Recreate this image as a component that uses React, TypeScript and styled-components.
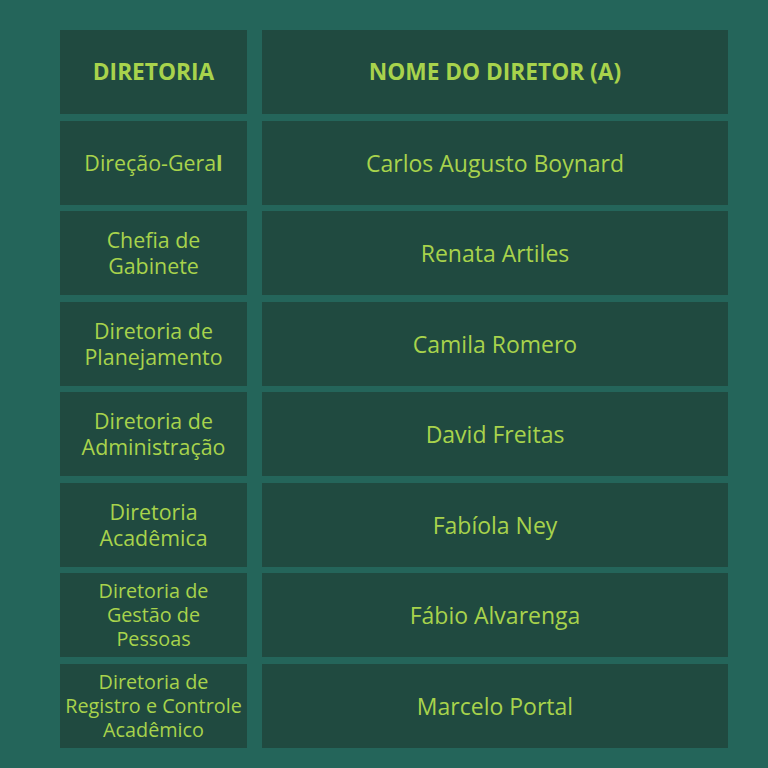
import React from 'react';
import styled, { createGlobalStyle } from 'styled-components';

const Global = createGlobalStyle`
  html, body {
    margin: 0;
    padding: 0;
    background: #24655a;
  }
  body {
    font-family: 'Open Sans', 'Liberation Sans', sans-serif;
  }
`;

const Page = styled.div`
  width: 768px;
  height: 768px;
  box-sizing: border-box;
  padding: 30px 40px 20px 60px;
  background: #24655a;
`;

const Table = styled.div`
  display: grid;
  grid-template-columns: 187px 466px;
  grid-auto-rows: 84px;
  column-gap: 15px;
  row-gap: 6.5px;
`;

const Cell = styled.div<{ $wide?: boolean; $head?: boolean; $small?: boolean }>`
  background: #204a40;
  color: #a8d34c;
  display: flex;
  align-items: center;
  justify-content: center;
  text-align: center;
  font-size: ${(p) => (p.$head ? '22.7px' : p.$wide ? '23px' : p.$small ? '19.8px' : '21.4px')};
  font-weight: ${(p) => (p.$head ? 700 : 400)};
  line-height: ${(p) => (p.$small ? '24px' : '26px')};
  padding: 0 2px;
  box-sizing: border-box;
  white-space: nowrap;
`;

const Thick = styled.span`
  font-weight: 700;
`;

const rows: [React.ReactNode, string, boolean][] = [
  [<>Direção-Gera<Thick>l</Thick></>, 'Carlos Augusto Boynard', false],
  [<>Chefia de<br />Gabinete</>, 'Renata Artiles', false],
  [<>Diretoria de<br />Planejamento</>, 'Camila Romero', false],
  [<>Diretoria de<br />Administração</>, 'David Freitas', false],
  [<>Diretoria<br />Acadêmica</>, 'Fabíola Ney', false],
  [<>Diretoria de<br />Gestão de<br />Pessoas</>, 'Fábio Alvarenga', true],
  [<>Diretoria de<br />Registro e Controle<br />Acadêmico</>, 'Marcelo Portal', true],
];

const App = () => {
  return (
    <>
      <Global />
      <Page>
        <Table>
          <Cell $head>DIRETORIA</Cell>
          <Cell $head $wide>NOME DO DIRETOR (A)</Cell>
          {rows.map(([dept, name, small], i) => (
            <React.Fragment key={i}>
              <Cell $small={small}>{dept}</Cell>
              <Cell $wide>{name}</Cell>
            </React.Fragment>
          ))}
        </Table>
      </Page>
    </>
  );
};

export default App;
